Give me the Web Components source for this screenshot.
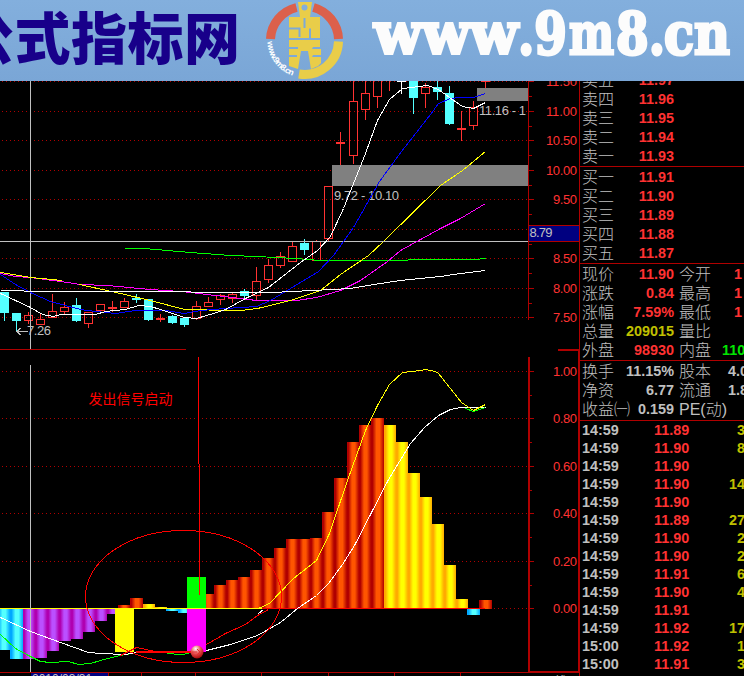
<!DOCTYPE html>
<html lang="zh-CN">
<head>
<meta charset="UTF-8">
<title>公式指标网</title>
<style>
    body {
        margin: 0;
        width: 744px;
        height: 676px;
        overflow: hidden;
        background: #000;
        font-family: "Liberation Sans", "Noto Sans CJK SC", sans-serif;
        --line-red: #b00000;
        --text-red: #ff3232;
        --silver: #c0c0c0;
    }
</style>
</head>
<body>
<trading-screen>
    <site-banner slot="banner"></site-banner>
    <price-pane slot="charts"></price-pane>
    <signal-pane slot="charts"></signal-pane>
    <quote-panel slot="quotes"></quote-panel>
</trading-screen>

<script>
// Page frame: banner on top, charts on the left, quotes on the right
class TradingScreen extends HTMLElement {
    constructor() {
        super();
        this.attachShadow({ mode: 'open' });
        this.shadowRoot.innerHTML = `
            <style>
                :host { display: flex; flex-direction: column; width: 744px; height: 676px; overflow: hidden; }
                .main { display: grid; grid-template-columns: 579px 165px; flex: 1; min-height: 0; }
                .charts { display: flex; flex-direction: column; }
            </style>
            <slot name="banner"></slot>
            <div class="main">
                <div class="charts"><slot name="charts"></slot></div>
                <slot name="quotes"></slot>
            </div>
        `;
    }
}

class SiteBanner extends HTMLElement {
    constructor() {
        super();
        this.attachShadow({ mode: 'open' });
        this.shadowRoot.innerHTML = `
            <style>
                :host { display: block; height: 81px; flex: none; background: linear-gradient(#83afdd, #7aa6d6); }
                svg { display: block; }
                .name { font: 900 56px "Noto Sans CJK SC", sans-serif; fill: #18008a; }
                .url { font: bold 58px "DejaVu Serif", serif; fill: #fcfcfc; stroke: #fcfcfc; stroke-width: 3; }
                .ring { font: bold 8.5px "Liberation Sans", sans-serif; fill: #fff; }
            </style>
            <svg width="744" height="81" viewBox="0 0 744 81">
                <text class="name" x="-42" y="59" textLength="282">公式指标网</text>
                <g fill="none" stroke-width="9">
                    <path d="M270.500 39A34 34 0 0 1 296.500 7.500" stroke="#dc604b"></path>
                    <path d="M313.500 7.500A34 34 0 0 1 338.500 39" stroke="#dc604b"></path>
                    <path d="M338.500 41.500A34 34 0 0 1 299 74" stroke="#e9cd49"></path>
                </g>
                <path id="arc" d="M267.500 41.500A37 37 0 0 0 298 77" fill="none"></path>
                <text class="ring"><textPath href="#arc" textLength="45">www.9m8.cn</textPath></text>
                <path fill="#e9cd49" fill-rule="evenodd" d="M298 2H312L310 17H320V38H289V17H300ZM304.500 4.500A3 3 0 1 0 304.500 10.500A3 3 0 1 0 304.500 4.500Z"></path>
                <path fill="#e9cd49" d="M289 40H320V47H313L312 49H321V55H313L312 57H321V63L318 66L311 69L308 51H301L298 69L289 66V57H297V55H289V49H298V47H289Z"></path>
                <g fill="none" stroke="#7da9d8" stroke-width="2">
                    <path d="M289 28.500H299.500V37M310 38V28.500M304.500 18V28"></path>
                </g>
                <text class="url" x="374" y="53.500" textLength="144" lengthAdjust="spacingAndGlyphs">www</text>
                <text class="url" x="518" y="53.500" textLength="49" lengthAdjust="spacingAndGlyphs">.9</text>
                <text class="url" x="569" y="53.500" textLength="45" lengthAdjust="spacingAndGlyphs">m</text>
                <text class="url" x="616" y="53.500" textLength="49" lengthAdjust="spacingAndGlyphs">8.</text>
                <text class="url" x="664" y="53.500" textLength="66" lengthAdjust="spacingAndGlyphs">cn</text>
            </svg>
        `;
    }
}

// Vertical scale beside a pane, drawn in one svg so the labels line up with the ticks
class ValueAxis extends HTMLElement {
    constructor() {
        super();
        this.attachShadow({ mode: 'open' });
    }

    connectedCallback() {
        const top = Number(this.getAttribute('top'));
        const height = Number(this.getAttribute('height'));
        const from = Number(this.getAttribute('from'));
        const to = Number(this.getAttribute('to'));
        const thick = Number(this.getAttribute('thick') || 1);
        const labels = this.getAttribute('labels').split(' ').map(item => item.split('@'));
        const ys = labels.map(label => Number(label[1]));
        const minor = ys.slice(1).map((y, i) => Math.round((y + ys[i]) / 2));
        this.shadowRoot.innerHTML = `
            <style>
                :host { display: block; width: 51px; flex: none; }
                svg { display: block; }
                text { font-size: 13px; fill: var(--text-red); }
                .cursor { fill: var(--silver); }
                rect { fill: var(--line-red); }
            </style>
            <svg width="51" height="${height}" viewBox="528 ${top} 51 ${height}" shape-rendering="crispEdges">
                <rect x="528" y="${from}" width="${thick}" height="${to - from}"></rect>
                ${ys.map(y => `<rect x="528" y="${y}" width="6" height="1"></rect>`).join('')}
                ${minor.map(y => `<rect x="528" y="${y}" width="4" height="1"></rect>`).join('')}
                ${labels.filter(([name]) => name).map(([name, y]) => `<text x="577" y="${Number(y) + 5}" text-anchor="end" textLength="${name.length > 4 ? 31 : 24}">${name}</text>`).join('')}
                ${this.hasAttribute('cursor') ? `
                    <rect x="529" y="225" width="50" height="17"></rect>
                    <rect x="529" y="226" width="50" height="15" style="fill:#000080"></rect>
                    <text class="cursor" x="529.500" y="237" textLength="23">${this.getAttribute('cursor')}</text>
                ` : ''}
                ${this.hasAttribute('frame') ? `
                    <rect x="578" y="349" width="1" height="324"></rect>
                    <rect x="558" y="349" width="21" height="2"></rect>
                    <rect x="528" y="671" width="51" height="2"></rect>
                    <text x="541" y="686" style="fill:var(--silver)">日线</text>
                ` : ''}
            </svg>
        `;
    }
}

class PricePane extends HTMLElement {
    constructor() {
        super();
        this.attachShadow({ mode: 'open' });
        this.grid = [81, 111, 140, 170, 199, 229, 258, 288, 317];
        // [centre x, high, low, body top, body bottom, kind]
        this.candles = [
            [4, 292, 321, 292, 313, 'down'], [16, 313, 331, 313, 321, 'down'],
            [28, 312, 324, 315, 321, 'up'], [40, 314, 325, 319, 325, 'up'],
            [52, 294, 318, 311, 318, 'up'], [64, 302, 315, 307, 312, 'up'],
            [76, 298, 322, 305, 321, 'down'], [88, 312, 328, 312, 324, 'up'],
            [100, 304, 314, 304, 311, 'up'], [112, 301, 312, 307, 309, 'flat'],
            [124, 298, 308, 301, 308, 'up'], [136, 294, 303, 298, 300, 'down'],
            [148, 299, 321, 299, 320, 'down'], [160, 314, 322, 318, 320, 'flat'],
            [172, 315, 324, 316, 323, 'down'], [184, 317, 327, 318, 325, 'down'],
            [196, 301, 320, 306, 319, 'up'], [208, 297, 307, 302, 307, 'up'],
            [220, 294, 305, 295, 300, 'up'], [232, 293, 303, 294, 299, 'up'],
            [244, 289, 298, 291, 296, 'down'], [256, 267, 300, 281, 296, 'up'],
            [268, 259, 283, 265, 280, 'up'], [280, 252, 268, 256, 266, 'up'],
            [292, 242, 262, 246, 262, 'up'], [304, 239, 255, 243, 250, 'down'],
            [316, 240, 261, 241, 261, 'up'], [328, 186, 241, 186, 239, 'up'],
            [340, 132, 165, 142, 144, 'flat'], [353, 80, 164, 101, 156, 'up'],
            [365, 80, 120, 93, 110, 'up'], [377, 70, 108, 70, 97, 'up'],
            [389, 70, 91, 70, 76, 'up'], [401, 70, 94, 80, 82, 'white'],
            [413, 70, 114, 70, 98, 'down'], [425, 83, 108, 87, 94, 'up'],
            [437, 80, 100, 87, 92, 'down'], [449, 86, 125, 93, 124, 'down'],
            [461, 111, 141, 128, 130, 'flat'], [473, 101, 130, 107, 126, 'up'],
            [485, 80, 88, 80, 82, 'flat']
        ];
        this.averages = [
            ['#00ff00', '124,248 143,248 167,250 190,252 230,255 256,256 295,258 320,260 407,260 408,259 479,259 480,258 485,258'],
            ['#ff00ff', '0,273 15,276 30,277 60,281 80,284 107,285 150,289 180,291 190,292 215,295 256,300 296,300 316,297 340,290 360,280 387,261 400,250 440,228 460,218 485,203'],
            ['#ffff00', '0,272 30,277 62,280'],
            ['#ffff00', '79,284 120,293 150,300 184,309 202,309 215,310 240,310 257,308 290,300 320,290 340,274 368,255 383,241 440,185 462,170 485,151'],
            ['#0000ff', '0,274 15,284 32,293 50,301 65,305 80,309 95,311 115,313 135,310 165,310 184,313 200,310 225,308 256,306 270,300 290,288 318,271 333,255 353,227 379,181 401,151 430,114 438,103 450,98 460,97 473,97 485,93'],
            ['#ffffff', '0,290 23,290 24,291 190,291 191,292 273,292 290,291 313,290 350,288 380,283 400,280 440,276 460,273 485,270'],
            ['#ffffff', '0,293 15,300 30,307 42,314 53,316 60,314 95,314 105,311 125,309 138,305 150,306 160,309 175,314 184,317 196,318 213,313 225,309 245,298 268,287 300,262 317,250 330,236 343,208 353,183 365,153 377,120 389,99 402,88 427,85 438,89 449,97 462,106 473,108 485,102']
        ];
        this.render();
    }

    candle([x, high, low, top, bottom, kind]) {
        const color = kind === 'down' ? '#54ffff' : kind === 'white' ? '#fff' : '#ff3232';
        if (kind === 'up') {
            return `
                <rect x="${x}" y="${high}" width="1" height="${top - high}" fill="${color}"></rect>
                <rect x="${x}" y="${bottom}" width="1" height="${Math.max(0, low - bottom)}" fill="${color}"></rect>
                <rect x="${x - 3.5}" y="${top + 0.5}" width="8" height="${bottom - top - 1}" fill="none" stroke="${color}"></rect>`;
        }
        return `
            <rect x="${x}" y="${high}" width="1" height="${low - high}" fill="${color}"></rect>
            <rect x="${x - 4}" y="${top}" width="9" height="${bottom - top}" fill="${color}"></rect>`;
    }

    render() {
        // the 9.00 tick has no label, the cursor value takes its place
        this.shadowRoot.innerHTML = `
            <style>
                :host { display: flex; height: 268px; flex: none; }
                svg { display: block; }
                text { font-size: 13px; fill: var(--silver); }
            </style>
            <svg width="528" height="268" viewBox="0 81 528 268" shape-rendering="crispEdges">
                <g stroke="#b00000" stroke-dasharray="1 3">
                    ${this.grid.map(y => `<path d="M2 ${y + 0.5}H528"></path>`).join('')}
                </g>
                <g fill="#808080">
                    <rect x="332" y="165" width="196" height="21"></rect>
                    <rect x="477" y="88" width="51" height="13"></rect>
                </g>
                ${this.candles.map(c => this.candle(c)).join('')}
                <text x="334" y="200" textLength="65">9.72 - 10.10</text>
                <text x="479" y="115" textLength="47">11.16 - 1</text>
                <path d="M17 331.500H28M20.500 328L17 331.500L20.500 335" fill="none" stroke="#c0c0c0"></path>
                <text x="27" y="335" textLength="24">7.26</text>
                <path d="M0 241.500H528M30.500 81V349" stroke="#c0c0c0"></path>
                <g fill="none" transform="translate(.5 .5)">
                    ${this.averages.map(([color, points]) => `<polyline stroke="${color}" points="${points}"></polyline>`).join('')}
                </g>
            </svg>
            <value-axis top="81" height="268" from="81" to="320" cursor="8.79"
                labels="11.50@81 11.00@111 10.50@140 10.00@170 9.50@199 @229 8.50@258 8.00@288 7.50@317"></value-axis>
        `;
    }
}

class SignalPane extends HTMLElement {
    constructor() {
        super();
        this.attachShadow({ mode: 'open' });
        // [left, right, top, bottom, fill]
        this.bars = [
            [-3, 10, 609, 650, 'cyan'], [10, 23, 609, 659, 'cyan'], [23, 35, 609, 659, 'violet'],
            [35, 47, 609, 658, 'violet'], [47, 59, 609, 651, 'violet'], [59, 71, 609, 641, 'violet'],
            [71, 83, 609, 639, 'violet'], [83, 95, 609, 632, 'violet'], [95, 107, 609, 621, 'violet'],
            [107, 119, 609, 614, 'violet'], [118, 130, 605, 608, 'orange'], [130, 143, 598, 608, 'orange'],
            [143, 155, 604, 608, 'gold'], [155, 167, 607, 608, 'gold'], [166, 178, 609, 611, 'cyan'],
            [178, 190, 609, 613, 'cyan'], [202, 214, 594, 609, 'orange'], [214, 226, 585, 609, 'orange'],
            [226, 238, 580, 609, 'orange'], [238, 250, 577, 609, 'orange'], [250, 262, 570, 609, 'orange'],
            [262, 274, 558, 609, 'orange'], [274, 286, 548, 609, 'orange'], [286, 298, 539, 609, 'orange'],
            [298, 310, 539, 609, 'orange'], [310, 322, 538, 609, 'orange'], [322, 334, 512, 609, 'orange'],
            [334, 347, 478, 609, 'orange'], [347, 359, 442, 609, 'orange'], [359, 371, 425, 609, 'orange'],
            [371, 384, 418, 609, 'orange'], [384, 396, 425, 609, 'gold'], [396, 408, 442, 609, 'gold'],
            [408, 420, 473, 609, 'gold'], [420, 432, 497, 609, 'gold'], [432, 444, 524, 609, 'gold'],
            [444, 456, 565, 609, 'gold'], [456, 468, 599, 609, 'gold'], [467, 480, 609, 615, 'cyan'],
            [479, 492, 600, 609, 'orange']
        ];
        this.render();
    }

    gradient(id, edge, middle) {
        return `
            <linearGradient id="${id}">
                <stop offset="0" stop-color="${edge}"></stop>
                <stop offset=".12" stop-color="${edge}"></stop>
                <stop offset=".42" stop-color="${middle}"></stop>
                <stop offset=".66" stop-color="${middle}"></stop>
                <stop offset="1" stop-color="${edge}"></stop>
            </linearGradient>`;
    }

    render() {
        this.shadowRoot.innerHTML = `
            <style>
                :host { display: flex; height: 327px; flex: none; }
                svg { display: block; }
                .note { font-size: 14px; fill: #f00; }
                .date { font-size: 12px; fill: var(--silver); }
            </style>
            <svg width="528" height="327" viewBox="0 349 528 327" shape-rendering="crispEdges">
                <defs>
                    ${this.gradient('orange', '#b00000', '#ff5500')}
                    ${this.gradient('gold', '#ffaa00', '#ffff00')}
                    ${this.gradient('cyan', '#00a8ff', '#54ffff')}
                    ${this.gradient('violet', '#b000b0', '#bb50ff')}
                    <radialGradient id="ball" cx=".4" cy=".25" r=".8">
                        <stop offset="0" stop-color="#fff"></stop>
                        <stop offset=".5" stop-color="#e84848"></stop>
                        <stop offset="1" stop-color="#a00000"></stop>
                    </radialGradient>
                </defs>
                <g stroke="#b00000" stroke-dasharray="1 3">
                    ${[371, 418, 466, 513, 561, 608].map(y => `<path d="M2 ${y + 0.5}H528"></path>`).join('')}
                </g>
                <path d="M0 349.500H186" stroke="#b00000"></path>
                ${this.bars.map(([l, r, t, b, fill]) => `<rect x="${l}" y="${t}" width="${r - l}" height="${b - t}" fill="url(#${fill})"></rect>`).join('')}
                <rect x="115" y="608" width="19" height="44" fill="#ff0"></rect>
                <rect x="187" y="577" width="19" height="31" fill="#0f0"></rect>
                <rect x="187" y="609" width="19" height="43" fill="#f0f"></rect>
                <path d="M0 608.500H262" stroke="#ff0"></path>
                <path d="M262 608.500H485" stroke="#f00"></path>
                <path d="M30.500 365V672" stroke="#c0c0c0"></path>
                <g fill="none" transform="translate(.5 .5)">
                    <polyline stroke="#0f0" points="0,634 15,648 28,655 40,661 50,662 68,661 78,664 90,663 100,660 115,656 136,652"></polyline>
                    <polyline stroke="#0f0" points="167,653 180,654 189,653"></polyline>
                    <polyline stroke="#fff" points="0,617 30,631 60,642 88,652 100,653 125,654 136,652"></polyline>
                    <polyline stroke="#fff" points="206,650 230,644 257,635 280,622 297,608 316,595 328,583 342,564 354,545 370,514 388,479 410,443 424,427 438,415 450,409 460,407 485,407"></polyline>
                    <path stroke="#fff" d="M258 613L263 609"></path>
                    <polyline stroke="#f00" points="206,644 225,633 245,624 257,615 268,609"></polyline>
                    <polyline stroke="#f00" points="120,655 136,647 155,651"></polyline>
                    <polyline stroke="#ff0" points="237,608 258,608 269,603 293,578 316,560 329,533 347,480 365,430 377,405 389,384 402,372 420,370 425,369 435,371 438,373 461,402 473,410 485,404"></polyline>
                    <polyline stroke="#0f0" points="465,408 473,411 485,407"></polyline>
                    <ellipse cx="183" cy="596" rx="98" ry="66" stroke="#f00"></ellipse>
                    <path d="M198 356V463M199 463V594" stroke="#f00"></path>
                </g>
                <rect x="136" y="651" width="60" height="2" fill="#f00"></rect>
                <circle cx="197" cy="652" r="6.500" fill="url(#ball)" shape-rendering="auto"></circle>
                <path d="M192 652H197M197 649L200 652L197 655" fill="none" stroke="#e03030" shape-rendering="auto"></path>
                <text class="note" x="88.500" y="404">发出信号启动</text>
                <path d="M0 672.500H528M108.500 672V676M141.500 672V676M195.500 672V676M261.500 672V676M328.500 672V676M394.500 672V676M460.500 672V676" stroke="#b00000"></path>
                <rect x="31" y="673" width="77" height="3" fill="#000080"></rect>
                <text class="date" x="32" y="683">2010/03/31</text>
            </svg>
            <value-axis top="349" height="327" from="357" to="673" thick="2" frame
                labels="1.00@371 0.80@418 0.60@466 0.40@513 0.20@561 0.00@608"></value-axis>
        `;
    }
}

class QuotePanel extends HTMLElement {
    constructor() {
        super();
        this.attachShadow({ mode: 'open' });
        this.asks = [['卖五', '11.97'], ['卖四', '11.96'], ['卖三', '11.95'], ['卖二', '11.94'], ['卖一', '11.93']];
        this.bids = [['买一', '11.91'], ['买二', '11.90'], ['买三', '11.89'], ['买四', '11.88'], ['买五', '11.87']];
        // label, value, colour, second label, second value, its indent, its colour
        this.stats = [
            ['现价', '11.90', 'red', '今开', '1', 23, 'red'],
            ['涨跌', '0.84', 'red', '最高', '1', 23, 'red'],
            ['涨幅', '7.59%', 'red', '最低', '1', 23, 'red'],
            ['总量', '209015', 'yellow', '量比', '', 0, 'red'],
            ['外盘', '98930', 'red', '内盘', '110', 11, 'green']
        ];
        this.capital = [
            ['换手', '11.15%', '', '股本', '4.0', 17, ''],
            ['净资', '6.77', '', '流通', '1.8', 17, ''],
            ['收益㈠', '0.159', '', 'PE(动)', '', 0, '']
        ];
        this.ticks = [
            ['14:59', '11.89', '3'], ['14:59', '11.90', '8'], ['14:59', '11.90', ''], ['14:59', '11.90', '14'],
            ['14:59', '11.90', ''], ['14:59', '11.89', '27'], ['14:59', '11.90', '2'], ['14:59', '11.90', '2'],
            ['14:59', '11.91', '6'], ['14:59', '11.90', '4'], ['14:59', '11.91', ''], ['14:59', '11.92', '17'],
            ['15:00', '11.92', '1'], ['15:00', '11.91', '3']
        ];
        this.render();
    }

    book(rows) {
        return rows.map(([label, price]) => `<div class="row"><span>${label}</span><b class="red">${price}</b></div>`).join('');
    }

    pairs(rows) {
        return rows.map(([label, value, color, label2, value2, indent, color2]) => `
            <div class="row">
                <span>${label}</span><b class="${color}">${value}</b>
                <span class="second">${label2}</span>
                ${value2 ? `<b class="${color2}" style="margin-left:${indent}px">${value2}</b>` : ''}
            </div>`).join('');
    }

    render() {
        this.shadowRoot.innerHTML = `
            <style>
                :host { display: flex; flex-direction: column; overflow: hidden; border-left: 1px solid var(--line-red); color: var(--silver); }
                section { flex: none; border-bottom: 1px solid var(--line-red); padding-left: 2px; }
                .asks { margin-top: -11px; padding-bottom: 1px; }
                .bids, .stats { padding-bottom: 1px; }
                .capital { padding-bottom: 2px; }
                section:last-child { border: 0; }
                .row { display: grid; grid-template-columns: 34px 58px 37px 40px; width: 170px; height: 19px; line-height: 21px; white-space: nowrap; }
                .row > b:nth-child(2) { text-align: right; }
                .row .second { margin-left: 5px; }
                span { font-size: 16px; font-weight: 300; }
                b { font-size: 14.4px; }
                .tick { display: grid; grid-template-columns: 72px 36px 55px; height: 18px; line-height: 19px; }
                .tick b:last-child { text-align: right; }
                .red { color: var(--text-red); }
                .yellow { color: #c0c000; }
                .green { color: #00e600; }
            </style>
            <section class="asks">${this.book(this.asks)}</section>
            <section class="bids">${this.book(this.bids)}</section>
            <section class="stats">${this.pairs(this.stats)}</section>
            <section class="capital">${this.pairs(this.capital)}</section>
            <section>
                ${this.ticks.map(([time, price, volume]) => `
                    <div class="tick"><b>${time}</b><b class="red">${price}</b><b class="yellow">${volume}</b></div>
                `).join('')}
            </section>
        `;
    }
}

customElements.define('value-axis', ValueAxis);
customElements.define('site-banner', SiteBanner);
customElements.define('price-pane', PricePane);
customElements.define('signal-pane', SignalPane);
customElements.define('quote-panel', QuotePanel);
customElements.define('trading-screen', TradingScreen);
</script>
</body>
</html>
